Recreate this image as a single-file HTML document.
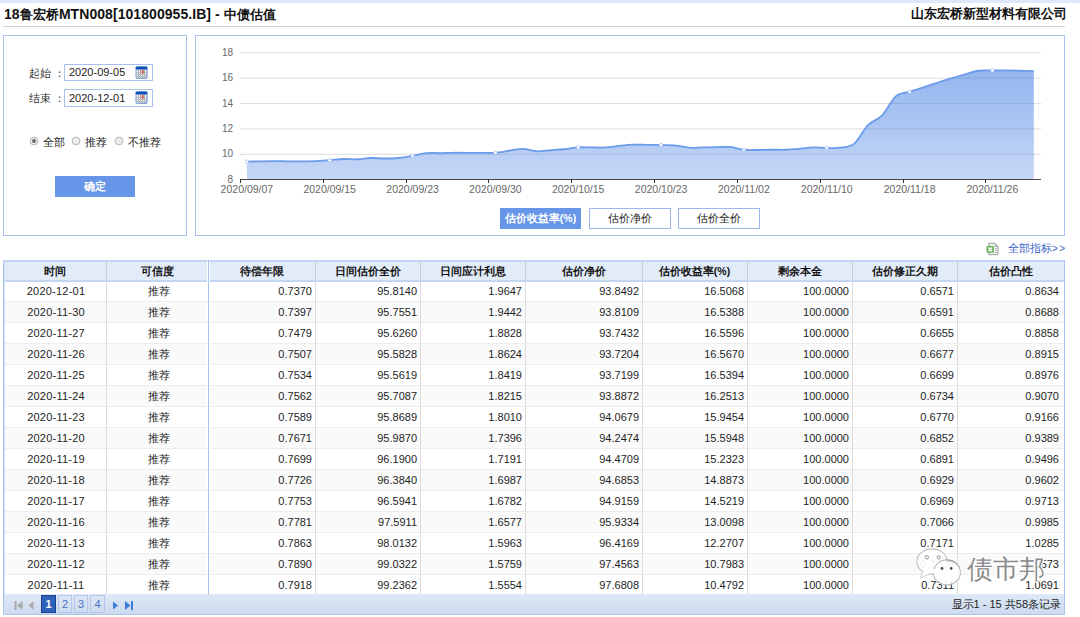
<!DOCTYPE html>
<html><head><meta charset="utf-8">
<style>
html,body{margin:0;padding:0;}
body{width:1080px;height:617px;overflow:hidden;position:relative;background:#fff;font-family:"Liberation Sans",sans-serif;font-size:11px;color:#1e1e1e;}
div,span{position:absolute;}
.chart{position:absolute;left:0;top:0;}
.hd{height:19px;line-height:21px;text-align:center;font-weight:bold;color:#111;font-size:10.5px;}
.cc{height:20px;line-height:20px;text-align:center;padding-left:3px;box-sizing:border-box;}
.dt{letter-spacing:0.22px;}
.cr{height:20px;line-height:20px;text-align:right;}
span{position:static;}
.t{font-size:13px;}
.panel{border:1px solid #a8c1f1;box-sizing:border-box;}
.inp{border:1px solid #a8c1f1;box-sizing:border-box;background:#fff;}
.btn{box-sizing:border-box;border:1px solid #9db7ee;text-align:center;line-height:19px;color:#222;font-size:10.5px;}
</style></head><body>
<div style="left:0;top:0;width:1080px;height:3px;background:#dfe9f9"></div>
<div style="left:4px;top:5px;font-size:14px;font-weight:bold;color:#111;white-space:nowrap;line-height:18px;letter-spacing:0.06px">18<span class="t">鲁宏桥</span>MTN008[101800955.IB] - <span class="t">中债估值</span></div>
<div style="right:13px;top:5px;font-size:13px;font-weight:bold;color:#111;white-space:nowrap;line-height:18px">山东宏桥新型材料有限公司</div>
<div style="left:3px;top:26px;width:1062px;height:1px;background:#cfcfcf"></div>

<div class="panel" style="left:3px;top:35px;width:184px;height:201px"></div>
<div class="panel" style="left:195px;top:35px;width:870px;height:201px"></div>

<div style="left:29px;top:65px;line-height:16px;color:#333">起始 ：</div>
<div class="inp" style="left:64px;top:64px;width:89px;height:17px"></div>
<div style="left:69px;top:65px;line-height:15px;color:#222">2020-09-05</div>
<div style="left:29px;top:90px;line-height:16px;color:#333">结束 ：</div>
<div class="inp" style="left:64px;top:89px;width:89px;height:18px"></div>
<div style="left:69px;top:90px;line-height:16px;color:#222">2020-12-01</div>
<svg style="position:absolute;left:135px;top:66px" width="13" height="13" viewBox="0 0 13 13">
<defs><linearGradient id="cb66" x1="0" y1="0" x2="1" y2="1"><stop offset="0" stop-color="#8fb6e8"/><stop offset="1" stop-color="#3d6fc0"/></linearGradient></defs>
<rect x="0.5" y="0.5" width="12" height="12.3" rx="1.8" fill="url(#cb66)"/>
<rect x="1.6" y="3.2" width="9.9" height="8.5" fill="#f2f2f2"/>
<line x1="3.5" y1="3.5" x2="3.5" y2="11.5" stroke="#a9a9a9" stroke-width="0.9"/><line x1="5.5" y1="3.5" x2="5.5" y2="11.5" stroke="#a9a9a9" stroke-width="0.9"/><line x1="7.5" y1="3.5" x2="7.5" y2="11.5" stroke="#a9a9a9" stroke-width="0.9"/><line x1="9.5" y1="3.5" x2="9.5" y2="11.5" stroke="#a9a9a9" stroke-width="0.9"/><line x1="1.5" y1="6.5" x2="11.5" y2="6.5" stroke="#b5b5b5" stroke-width="0.9"/><line x1="1.5" y1="8.5" x2="11.5" y2="8.5" stroke="#b5b5b5" stroke-width="0.9"/><line x1="1.5" y1="10.5" x2="11.5" y2="10.5" stroke="#b5b5b5" stroke-width="0.9"/><rect x="6.6" y="4" width="2.2" height="3.6" fill="#c95050" opacity="0.8"/>
<rect x="0.5" y="0.5" width="12" height="3" rx="1.5" fill="#0f4fb8"/>
</svg>
<svg style="position:absolute;left:135px;top:91px" width="13" height="13" viewBox="0 0 13 13">
<defs><linearGradient id="cb91" x1="0" y1="0" x2="1" y2="1"><stop offset="0" stop-color="#8fb6e8"/><stop offset="1" stop-color="#3d6fc0"/></linearGradient></defs>
<rect x="0.5" y="0.5" width="12" height="12.3" rx="1.8" fill="url(#cb91)"/>
<rect x="1.6" y="3.2" width="9.9" height="8.5" fill="#f2f2f2"/>
<line x1="3.5" y1="3.5" x2="3.5" y2="11.5" stroke="#a9a9a9" stroke-width="0.9"/><line x1="5.5" y1="3.5" x2="5.5" y2="11.5" stroke="#a9a9a9" stroke-width="0.9"/><line x1="7.5" y1="3.5" x2="7.5" y2="11.5" stroke="#a9a9a9" stroke-width="0.9"/><line x1="9.5" y1="3.5" x2="9.5" y2="11.5" stroke="#a9a9a9" stroke-width="0.9"/><line x1="1.5" y1="6.5" x2="11.5" y2="6.5" stroke="#b5b5b5" stroke-width="0.9"/><line x1="1.5" y1="8.5" x2="11.5" y2="8.5" stroke="#b5b5b5" stroke-width="0.9"/><line x1="1.5" y1="10.5" x2="11.5" y2="10.5" stroke="#b5b5b5" stroke-width="0.9"/><rect x="6.6" y="4" width="2.2" height="3.6" fill="#c95050" opacity="0.8"/>
<rect x="0.5" y="0.5" width="12" height="3" rx="1.5" fill="#0f4fb8"/>
</svg>

<svg style="position:absolute;left:29px;top:136px" width="10" height="10" viewBox="0 0 10 10"><circle cx="5" cy="5" r="3.9" fill="#ececec" stroke="#b0b0b0" stroke-width="0.9"/><circle cx="5" cy="5" r="1.9" fill="#666"/></svg><svg style="position:absolute;left:71px;top:136px" width="10" height="10" viewBox="0 0 10 10"><circle cx="5" cy="5" r="3.9" fill="#ececec" stroke="#b0b0b0" stroke-width="0.9"/></svg><svg style="position:absolute;left:114px;top:136px" width="10" height="10" viewBox="0 0 10 10"><circle cx="5" cy="5" r="3.9" fill="#ececec" stroke="#b0b0b0" stroke-width="0.9"/></svg><div style="left:43px;top:134px;line-height:16px;color:#222">全部</div><div style="left:85px;top:134px;line-height:16px;color:#222">推荐</div><div style="left:128px;top:134px;line-height:16px;color:#222">不推荐</div>

<div style="left:55px;top:176px;width:80px;height:21px;background:#6795e8;color:#fff;font-weight:bold;text-align:center;line-height:21px">确定</div>

<svg class="chart" width="1080" height="240" viewBox="0 0 1080 240">
<defs><linearGradient id="g" x1="0" y1="52" x2="0" y2="179" gradientUnits="userSpaceOnUse">
<stop offset="0" stop-color="#4f86e4" stop-opacity="0.66"/><stop offset="1" stop-color="#4f86e4" stop-opacity="0.33"/></linearGradient></defs>
<line x1="240" y1="154.3" x2="1041" y2="154.3" stroke="#dcdcdc" stroke-width="1"/><line x1="240" y1="128.9" x2="1041" y2="128.9" stroke="#dcdcdc" stroke-width="1"/><line x1="240" y1="103.5" x2="1041" y2="103.5" stroke="#dcdcdc" stroke-width="1"/><line x1="240" y1="78.1" x2="1041" y2="78.1" stroke="#dcdcdc" stroke-width="1"/><line x1="240" y1="52.7" x2="1041" y2="52.7" stroke="#dcdcdc" stroke-width="1"/>
<path d="M246.90 161.67 C249.20 161.61 256.11 161.38 260.71 161.29 C265.31 161.21 269.91 161.17 274.51 161.17 C279.11 161.17 283.72 161.27 288.32 161.29 C292.92 161.31 297.52 161.31 302.12 161.29 C306.73 161.27 311.33 161.36 315.93 161.17 C320.53 160.98 325.13 160.51 329.73 160.15 C334.34 159.79 338.94 159.16 343.54 159.01 C348.14 158.86 352.74 159.43 357.34 159.26 C361.95 159.09 366.55 158.12 371.15 157.99 C375.75 157.86 380.35 158.50 384.95 158.50 C389.56 158.50 394.16 158.44 398.76 157.99 C403.36 157.55 407.96 156.66 412.56 155.83 C417.17 155.01 421.77 153.50 426.37 153.04 C430.97 152.57 435.57 153.08 440.18 153.04 C444.78 153.00 449.38 152.83 453.98 152.78 C458.58 152.74 463.18 152.78 467.79 152.78 C472.39 152.78 476.99 152.78 481.59 152.78 C486.19 152.78 490.79 153.12 495.40 152.78 C500.00 152.45 504.60 151.41 509.20 150.75 C513.80 150.10 518.40 148.76 523.01 148.85 C527.61 148.93 532.21 151.03 536.81 151.26 C541.41 151.49 546.01 150.58 550.62 150.24 C555.22 149.91 559.82 149.71 564.42 149.23 C569.02 148.74 573.63 147.62 578.23 147.32 C582.83 147.03 587.43 147.43 592.03 147.45 C596.63 147.47 601.24 147.73 605.84 147.45 C610.44 147.17 615.04 146.26 619.64 145.80 C624.24 145.33 628.85 144.83 633.45 144.66 C638.05 144.49 642.65 144.72 647.25 144.78 C651.85 144.85 656.46 144.95 661.06 145.04 C665.66 145.12 670.26 144.85 674.86 145.29 C679.46 145.74 684.07 147.34 688.67 147.70 C693.27 148.06 697.87 147.53 702.47 147.45 C707.07 147.37 711.68 147.28 716.28 147.20 C720.88 147.11 725.48 146.52 730.08 146.94 C734.69 147.37 739.29 149.23 743.89 149.74 C748.49 150.24 753.09 149.99 757.69 149.99 C762.30 149.99 766.90 149.78 771.50 149.74 C776.10 149.69 780.70 149.88 785.30 149.74 C789.91 149.59 794.51 149.23 799.11 148.85 C803.71 148.47 808.31 147.60 812.91 147.45 C817.52 147.30 822.12 147.91 826.72 147.96 C831.32 148.00 835.92 148.43 840.52 147.71 C845.13 147.00 849.73 147.45 854.33 143.66 C858.93 139.87 863.53 129.64 868.14 124.96 C872.74 120.28 877.34 120.34 881.94 115.58 C886.54 110.81 891.14 100.35 895.75 96.37 C900.35 92.40 904.95 93.23 909.55 91.73 C914.15 90.23 918.75 88.85 923.36 87.35 C927.96 85.85 932.56 84.26 937.16 82.75 C941.76 81.24 946.36 79.68 950.97 78.29 C955.57 76.90 960.17 75.67 964.77 74.41 C969.37 73.15 973.98 71.42 978.58 70.75 C983.18 70.08 987.78 70.44 992.38 70.40 C996.98 70.36 1001.59 70.43 1006.19 70.49 C1010.79 70.55 1015.39 70.65 1019.99 70.76 C1024.59 70.87 1031.50 71.10 1033.80 71.16 L1033.80 179.20 L246.90 179.20 Z" fill="url(#g)"/>
<path d="M246.90 161.67 C249.20 161.61 256.11 161.38 260.71 161.29 C265.31 161.21 269.91 161.17 274.51 161.17 C279.11 161.17 283.72 161.27 288.32 161.29 C292.92 161.31 297.52 161.31 302.12 161.29 C306.73 161.27 311.33 161.36 315.93 161.17 C320.53 160.98 325.13 160.51 329.73 160.15 C334.34 159.79 338.94 159.16 343.54 159.01 C348.14 158.86 352.74 159.43 357.34 159.26 C361.95 159.09 366.55 158.12 371.15 157.99 C375.75 157.86 380.35 158.50 384.95 158.50 C389.56 158.50 394.16 158.44 398.76 157.99 C403.36 157.55 407.96 156.66 412.56 155.83 C417.17 155.01 421.77 153.50 426.37 153.04 C430.97 152.57 435.57 153.08 440.18 153.04 C444.78 153.00 449.38 152.83 453.98 152.78 C458.58 152.74 463.18 152.78 467.79 152.78 C472.39 152.78 476.99 152.78 481.59 152.78 C486.19 152.78 490.79 153.12 495.40 152.78 C500.00 152.45 504.60 151.41 509.20 150.75 C513.80 150.10 518.40 148.76 523.01 148.85 C527.61 148.93 532.21 151.03 536.81 151.26 C541.41 151.49 546.01 150.58 550.62 150.24 C555.22 149.91 559.82 149.71 564.42 149.23 C569.02 148.74 573.63 147.62 578.23 147.32 C582.83 147.03 587.43 147.43 592.03 147.45 C596.63 147.47 601.24 147.73 605.84 147.45 C610.44 147.17 615.04 146.26 619.64 145.80 C624.24 145.33 628.85 144.83 633.45 144.66 C638.05 144.49 642.65 144.72 647.25 144.78 C651.85 144.85 656.46 144.95 661.06 145.04 C665.66 145.12 670.26 144.85 674.86 145.29 C679.46 145.74 684.07 147.34 688.67 147.70 C693.27 148.06 697.87 147.53 702.47 147.45 C707.07 147.37 711.68 147.28 716.28 147.20 C720.88 147.11 725.48 146.52 730.08 146.94 C734.69 147.37 739.29 149.23 743.89 149.74 C748.49 150.24 753.09 149.99 757.69 149.99 C762.30 149.99 766.90 149.78 771.50 149.74 C776.10 149.69 780.70 149.88 785.30 149.74 C789.91 149.59 794.51 149.23 799.11 148.85 C803.71 148.47 808.31 147.60 812.91 147.45 C817.52 147.30 822.12 147.91 826.72 147.96 C831.32 148.00 835.92 148.43 840.52 147.71 C845.13 147.00 849.73 147.45 854.33 143.66 C858.93 139.87 863.53 129.64 868.14 124.96 C872.74 120.28 877.34 120.34 881.94 115.58 C886.54 110.81 891.14 100.35 895.75 96.37 C900.35 92.40 904.95 93.23 909.55 91.73 C914.15 90.23 918.75 88.85 923.36 87.35 C927.96 85.85 932.56 84.26 937.16 82.75 C941.76 81.24 946.36 79.68 950.97 78.29 C955.57 76.90 960.17 75.67 964.77 74.41 C969.37 73.15 973.98 71.42 978.58 70.75 C983.18 70.08 987.78 70.44 992.38 70.40 C996.98 70.36 1001.59 70.43 1006.19 70.49 C1010.79 70.55 1015.39 70.65 1019.99 70.76 C1024.59 70.87 1031.50 71.10 1033.80 71.16" fill="none" stroke="#6b9bea" stroke-width="1.8"/>
<circle cx="246.90" cy="161.67" r="1.7" fill="#fff" stroke="#9dbdf0" stroke-width="0.7"/><circle cx="329.73" cy="160.15" r="1.7" fill="#fff" stroke="#9dbdf0" stroke-width="0.7"/><circle cx="412.56" cy="155.83" r="1.7" fill="#fff" stroke="#9dbdf0" stroke-width="0.7"/><circle cx="495.40" cy="152.78" r="1.7" fill="#fff" stroke="#9dbdf0" stroke-width="0.7"/><circle cx="578.23" cy="147.32" r="1.7" fill="#fff" stroke="#9dbdf0" stroke-width="0.7"/><circle cx="661.06" cy="145.04" r="1.7" fill="#fff" stroke="#9dbdf0" stroke-width="0.7"/><circle cx="743.89" cy="149.74" r="1.7" fill="#fff" stroke="#9dbdf0" stroke-width="0.7"/><circle cx="826.72" cy="147.96" r="1.7" fill="#fff" stroke="#9dbdf0" stroke-width="0.7"/><circle cx="909.55" cy="91.73" r="1.7" fill="#fff" stroke="#9dbdf0" stroke-width="0.7"/><circle cx="992.38" cy="70.40" r="1.7" fill="#fff" stroke="#9dbdf0" stroke-width="0.7"/>
<line x1="240" y1="179.5" x2="1041" y2="179.5" stroke="#4a4a4a" stroke-width="1.2"/>
<line x1="240.5" y1="179" x2="240.5" y2="183" stroke="#333" stroke-width="1"/><line x1="323.5" y1="179" x2="323.5" y2="183" stroke="#333" stroke-width="1"/><line x1="406.5" y1="179" x2="406.5" y2="183" stroke="#333" stroke-width="1"/><line x1="488.5" y1="179" x2="488.5" y2="183" stroke="#333" stroke-width="1"/><line x1="571.5" y1="179" x2="571.5" y2="183" stroke="#333" stroke-width="1"/><line x1="654.5" y1="179" x2="654.5" y2="183" stroke="#333" stroke-width="1"/><line x1="737.5" y1="179" x2="737.5" y2="183" stroke="#333" stroke-width="1"/><line x1="820.5" y1="179" x2="820.5" y2="183" stroke="#333" stroke-width="1"/><line x1="903.5" y1="179" x2="903.5" y2="183" stroke="#333" stroke-width="1"/><line x1="985.5" y1="179" x2="985.5" y2="183" stroke="#333" stroke-width="1"/>
<g font-family="Liberation Sans, sans-serif" font-size="10" fill="#686868"><text x="233" y="182.8" text-anchor="end">8</text><text x="233" y="157.4" text-anchor="end">10</text><text x="233" y="132.0" text-anchor="end">12</text><text x="233" y="106.6" text-anchor="end">14</text><text x="233" y="81.2" text-anchor="end">16</text><text x="233" y="55.8" text-anchor="end">18</text><text x="246.9" y="193.3" text-anchor="middle" font-size="10.5" fill="#686868">2020/09/07</text><text x="329.7" y="193.3" text-anchor="middle" font-size="10.5" fill="#686868">2020/09/15</text><text x="412.6" y="193.3" text-anchor="middle" font-size="10.5" fill="#686868">2020/09/23</text><text x="495.4" y="193.3" text-anchor="middle" font-size="10.5" fill="#686868">2020/09/30</text><text x="578.2" y="193.3" text-anchor="middle" font-size="10.5" fill="#686868">2020/10/15</text><text x="661.1" y="193.3" text-anchor="middle" font-size="10.5" fill="#686868">2020/10/23</text><text x="743.9" y="193.3" text-anchor="middle" font-size="10.5" fill="#686868">2020/11/02</text><text x="826.7" y="193.3" text-anchor="middle" font-size="10.5" fill="#686868">2020/11/10</text><text x="909.6" y="193.3" text-anchor="middle" font-size="10.5" fill="#686868">2020/11/18</text><text x="992.4" y="193.3" text-anchor="middle" font-size="10.5" fill="#686868">2020/11/26</text></g>
</svg>

<div class="btn" style="left:500px;top:208px;width:81px;height:21px;background:#6795e8;border-color:#6795e8;color:#fff;font-weight:bold;">估价收益率(%)</div>
<div class="btn" style="left:589px;top:208px;width:82px;height:21px;">估价净价</div>
<div class="btn" style="left:678px;top:208px;width:82px;height:21px;">估价全价</div>

<svg style="position:absolute;left:986px;top:242px" width="14" height="14" viewBox="0 0 14 14">
<path d="M2.8 1.3 H9 L12 4.3 V12.7 H2.8 Z" fill="#fafafa" stroke="#8f9a9a" stroke-width="1"/>
<path d="M9 1.3 V4.3 H12" fill="#cfd6d6" stroke="#8f9a9a" stroke-width="0.8"/>
<g stroke="#9aa" stroke-width="0.9"><line x1="8.8" y1="6.5" x2="11" y2="6.5"/><line x1="8.8" y1="8.5" x2="11" y2="8.5"/><line x1="8.8" y1="10.5" x2="11" y2="10.5"/></g>
<rect x="0.5" y="3.8" width="7.5" height="7.2" rx="1.5" fill="#6fb861"/>
<path d="M2.5 5.5 L6 9.5 M6 5.5 L2.5 9.5" stroke="#fff" stroke-width="1.3"/>
</svg>
<div style="left:1008px;top:241px;color:#3a64c8;line-height:14px">全部指标<span style="font-size:10px;letter-spacing:1.5px">&gt;&gt;</span></div>

<div style="left:3px;top:260px;width:1062px;height:22px;background:#e2ebf8;border-top:2px solid #c3d5f0;border-bottom:2px solid #c3d5f0;box-sizing:border-box;z-index:2"></div>
<div class="hd" style="left:3px;top:261px;width:103px;z-index:3">时间</div>
<div class="hd" style="left:106px;top:261px;width:102px;z-index:3">可信度</div>
<div class="hd" style="left:208px;top:261px;width:107px;z-index:3">待偿年限</div>
<div class="hd" style="left:315px;top:261px;width:105px;z-index:3">日间估价全价</div>
<div class="hd" style="left:420px;top:261px;width:105px;z-index:3">日间应计利息</div>
<div class="hd" style="left:525px;top:261px;width:117px;z-index:3">估价净价</div>
<div class="hd" style="left:642px;top:261px;width:105px;z-index:3">估价收益率(%)</div>
<div class="hd" style="left:747px;top:261px;width:105px;z-index:3">剩余本金</div>
<div class="hd" style="left:852px;top:261px;width:105px;z-index:3">估价修正久期</div>
<div class="hd" style="left:957px;top:261px;width:107px;z-index:3">估价凸性</div>
<div style="left:4px;top:281px;width:1060px;height:21px;background:#ffffff;border-bottom:1px solid #ededed;box-sizing:border-box"></div>
<div class="cc dt" style="left:3px;top:281px;width:103px;">2020-12-01</div>
<div class="cc" style="left:106px;top:281px;width:102px;">推荐</div>
<div class="cr" style="left:208px;top:281px;width:104px;">0.7370</div>
<div class="cr" style="left:315px;top:281px;width:102px;">95.8140</div>
<div class="cr" style="left:420px;top:281px;width:102px;">1.9647</div>
<div class="cr" style="left:525px;top:281px;width:114px;">93.8492</div>
<div class="cr" style="left:642px;top:281px;width:102px;">16.5068</div>
<div class="cr" style="left:747px;top:281px;width:102px;">100.0000</div>
<div class="cr" style="left:852px;top:281px;width:102px;">0.6571</div>
<div class="cr" style="left:957px;top:281px;width:102px;">0.8634</div>
<div style="left:4px;top:302px;width:1060px;height:21px;background:#fafafa;border-bottom:1px solid #ededed;box-sizing:border-box"></div>
<div class="cc dt" style="left:3px;top:302px;width:103px;">2020-11-30</div>
<div class="cc" style="left:106px;top:302px;width:102px;">推荐</div>
<div class="cr" style="left:208px;top:302px;width:104px;">0.7397</div>
<div class="cr" style="left:315px;top:302px;width:102px;">95.7551</div>
<div class="cr" style="left:420px;top:302px;width:102px;">1.9442</div>
<div class="cr" style="left:525px;top:302px;width:114px;">93.8109</div>
<div class="cr" style="left:642px;top:302px;width:102px;">16.5388</div>
<div class="cr" style="left:747px;top:302px;width:102px;">100.0000</div>
<div class="cr" style="left:852px;top:302px;width:102px;">0.6591</div>
<div class="cr" style="left:957px;top:302px;width:102px;">0.8688</div>
<div style="left:4px;top:323px;width:1060px;height:21px;background:#ffffff;border-bottom:1px solid #ededed;box-sizing:border-box"></div>
<div class="cc dt" style="left:3px;top:323px;width:103px;">2020-11-27</div>
<div class="cc" style="left:106px;top:323px;width:102px;">推荐</div>
<div class="cr" style="left:208px;top:323px;width:104px;">0.7479</div>
<div class="cr" style="left:315px;top:323px;width:102px;">95.6260</div>
<div class="cr" style="left:420px;top:323px;width:102px;">1.8828</div>
<div class="cr" style="left:525px;top:323px;width:114px;">93.7432</div>
<div class="cr" style="left:642px;top:323px;width:102px;">16.5596</div>
<div class="cr" style="left:747px;top:323px;width:102px;">100.0000</div>
<div class="cr" style="left:852px;top:323px;width:102px;">0.6655</div>
<div class="cr" style="left:957px;top:323px;width:102px;">0.8858</div>
<div style="left:4px;top:344px;width:1060px;height:21px;background:#fafafa;border-bottom:1px solid #ededed;box-sizing:border-box"></div>
<div class="cc dt" style="left:3px;top:344px;width:103px;">2020-11-26</div>
<div class="cc" style="left:106px;top:344px;width:102px;">推荐</div>
<div class="cr" style="left:208px;top:344px;width:104px;">0.7507</div>
<div class="cr" style="left:315px;top:344px;width:102px;">95.5828</div>
<div class="cr" style="left:420px;top:344px;width:102px;">1.8624</div>
<div class="cr" style="left:525px;top:344px;width:114px;">93.7204</div>
<div class="cr" style="left:642px;top:344px;width:102px;">16.5670</div>
<div class="cr" style="left:747px;top:344px;width:102px;">100.0000</div>
<div class="cr" style="left:852px;top:344px;width:102px;">0.6677</div>
<div class="cr" style="left:957px;top:344px;width:102px;">0.8915</div>
<div style="left:4px;top:365px;width:1060px;height:21px;background:#ffffff;border-bottom:1px solid #ededed;box-sizing:border-box"></div>
<div class="cc dt" style="left:3px;top:365px;width:103px;">2020-11-25</div>
<div class="cc" style="left:106px;top:365px;width:102px;">推荐</div>
<div class="cr" style="left:208px;top:365px;width:104px;">0.7534</div>
<div class="cr" style="left:315px;top:365px;width:102px;">95.5619</div>
<div class="cr" style="left:420px;top:365px;width:102px;">1.8419</div>
<div class="cr" style="left:525px;top:365px;width:114px;">93.7199</div>
<div class="cr" style="left:642px;top:365px;width:102px;">16.5394</div>
<div class="cr" style="left:747px;top:365px;width:102px;">100.0000</div>
<div class="cr" style="left:852px;top:365px;width:102px;">0.6699</div>
<div class="cr" style="left:957px;top:365px;width:102px;">0.8976</div>
<div style="left:4px;top:386px;width:1060px;height:21px;background:#fafafa;border-bottom:1px solid #ededed;box-sizing:border-box"></div>
<div class="cc dt" style="left:3px;top:386px;width:103px;">2020-11-24</div>
<div class="cc" style="left:106px;top:386px;width:102px;">推荐</div>
<div class="cr" style="left:208px;top:386px;width:104px;">0.7562</div>
<div class="cr" style="left:315px;top:386px;width:102px;">95.7087</div>
<div class="cr" style="left:420px;top:386px;width:102px;">1.8215</div>
<div class="cr" style="left:525px;top:386px;width:114px;">93.8872</div>
<div class="cr" style="left:642px;top:386px;width:102px;">16.2513</div>
<div class="cr" style="left:747px;top:386px;width:102px;">100.0000</div>
<div class="cr" style="left:852px;top:386px;width:102px;">0.6734</div>
<div class="cr" style="left:957px;top:386px;width:102px;">0.9070</div>
<div style="left:4px;top:407px;width:1060px;height:21px;background:#ffffff;border-bottom:1px solid #ededed;box-sizing:border-box"></div>
<div class="cc dt" style="left:3px;top:407px;width:103px;">2020-11-23</div>
<div class="cc" style="left:106px;top:407px;width:102px;">推荐</div>
<div class="cr" style="left:208px;top:407px;width:104px;">0.7589</div>
<div class="cr" style="left:315px;top:407px;width:102px;">95.8689</div>
<div class="cr" style="left:420px;top:407px;width:102px;">1.8010</div>
<div class="cr" style="left:525px;top:407px;width:114px;">94.0679</div>
<div class="cr" style="left:642px;top:407px;width:102px;">15.9454</div>
<div class="cr" style="left:747px;top:407px;width:102px;">100.0000</div>
<div class="cr" style="left:852px;top:407px;width:102px;">0.6770</div>
<div class="cr" style="left:957px;top:407px;width:102px;">0.9166</div>
<div style="left:4px;top:428px;width:1060px;height:21px;background:#fafafa;border-bottom:1px solid #ededed;box-sizing:border-box"></div>
<div class="cc dt" style="left:3px;top:428px;width:103px;">2020-11-20</div>
<div class="cc" style="left:106px;top:428px;width:102px;">推荐</div>
<div class="cr" style="left:208px;top:428px;width:104px;">0.7671</div>
<div class="cr" style="left:315px;top:428px;width:102px;">95.9870</div>
<div class="cr" style="left:420px;top:428px;width:102px;">1.7396</div>
<div class="cr" style="left:525px;top:428px;width:114px;">94.2474</div>
<div class="cr" style="left:642px;top:428px;width:102px;">15.5948</div>
<div class="cr" style="left:747px;top:428px;width:102px;">100.0000</div>
<div class="cr" style="left:852px;top:428px;width:102px;">0.6852</div>
<div class="cr" style="left:957px;top:428px;width:102px;">0.9389</div>
<div style="left:4px;top:449px;width:1060px;height:21px;background:#ffffff;border-bottom:1px solid #ededed;box-sizing:border-box"></div>
<div class="cc dt" style="left:3px;top:449px;width:103px;">2020-11-19</div>
<div class="cc" style="left:106px;top:449px;width:102px;">推荐</div>
<div class="cr" style="left:208px;top:449px;width:104px;">0.7699</div>
<div class="cr" style="left:315px;top:449px;width:102px;">96.1900</div>
<div class="cr" style="left:420px;top:449px;width:102px;">1.7191</div>
<div class="cr" style="left:525px;top:449px;width:114px;">94.4709</div>
<div class="cr" style="left:642px;top:449px;width:102px;">15.2323</div>
<div class="cr" style="left:747px;top:449px;width:102px;">100.0000</div>
<div class="cr" style="left:852px;top:449px;width:102px;">0.6891</div>
<div class="cr" style="left:957px;top:449px;width:102px;">0.9496</div>
<div style="left:4px;top:470px;width:1060px;height:21px;background:#fafafa;border-bottom:1px solid #ededed;box-sizing:border-box"></div>
<div class="cc dt" style="left:3px;top:470px;width:103px;">2020-11-18</div>
<div class="cc" style="left:106px;top:470px;width:102px;">推荐</div>
<div class="cr" style="left:208px;top:470px;width:104px;">0.7726</div>
<div class="cr" style="left:315px;top:470px;width:102px;">96.3840</div>
<div class="cr" style="left:420px;top:470px;width:102px;">1.6987</div>
<div class="cr" style="left:525px;top:470px;width:114px;">94.6853</div>
<div class="cr" style="left:642px;top:470px;width:102px;">14.8873</div>
<div class="cr" style="left:747px;top:470px;width:102px;">100.0000</div>
<div class="cr" style="left:852px;top:470px;width:102px;">0.6929</div>
<div class="cr" style="left:957px;top:470px;width:102px;">0.9602</div>
<div style="left:4px;top:491px;width:1060px;height:21px;background:#ffffff;border-bottom:1px solid #ededed;box-sizing:border-box"></div>
<div class="cc dt" style="left:3px;top:491px;width:103px;">2020-11-17</div>
<div class="cc" style="left:106px;top:491px;width:102px;">推荐</div>
<div class="cr" style="left:208px;top:491px;width:104px;">0.7753</div>
<div class="cr" style="left:315px;top:491px;width:102px;">96.5941</div>
<div class="cr" style="left:420px;top:491px;width:102px;">1.6782</div>
<div class="cr" style="left:525px;top:491px;width:114px;">94.9159</div>
<div class="cr" style="left:642px;top:491px;width:102px;">14.5219</div>
<div class="cr" style="left:747px;top:491px;width:102px;">100.0000</div>
<div class="cr" style="left:852px;top:491px;width:102px;">0.6969</div>
<div class="cr" style="left:957px;top:491px;width:102px;">0.9713</div>
<div style="left:4px;top:512px;width:1060px;height:21px;background:#fafafa;border-bottom:1px solid #ededed;box-sizing:border-box"></div>
<div class="cc dt" style="left:3px;top:512px;width:103px;">2020-11-16</div>
<div class="cc" style="left:106px;top:512px;width:102px;">推荐</div>
<div class="cr" style="left:208px;top:512px;width:104px;">0.7781</div>
<div class="cr" style="left:315px;top:512px;width:102px;">97.5911</div>
<div class="cr" style="left:420px;top:512px;width:102px;">1.6577</div>
<div class="cr" style="left:525px;top:512px;width:114px;">95.9334</div>
<div class="cr" style="left:642px;top:512px;width:102px;">13.0098</div>
<div class="cr" style="left:747px;top:512px;width:102px;">100.0000</div>
<div class="cr" style="left:852px;top:512px;width:102px;">0.7066</div>
<div class="cr" style="left:957px;top:512px;width:102px;">0.9985</div>
<div style="left:4px;top:533px;width:1060px;height:21px;background:#ffffff;border-bottom:1px solid #ededed;box-sizing:border-box"></div>
<div class="cc dt" style="left:3px;top:533px;width:103px;">2020-11-13</div>
<div class="cc" style="left:106px;top:533px;width:102px;">推荐</div>
<div class="cr" style="left:208px;top:533px;width:104px;">0.7863</div>
<div class="cr" style="left:315px;top:533px;width:102px;">98.0132</div>
<div class="cr" style="left:420px;top:533px;width:102px;">1.5963</div>
<div class="cr" style="left:525px;top:533px;width:114px;">96.4169</div>
<div class="cr" style="left:642px;top:533px;width:102px;">12.2707</div>
<div class="cr" style="left:747px;top:533px;width:102px;">100.0000</div>
<div class="cr" style="left:852px;top:533px;width:102px;">0.7171</div>
<div class="cr" style="left:957px;top:533px;width:102px;">1.0285</div>
<div style="left:4px;top:554px;width:1060px;height:21px;background:#fafafa;border-bottom:1px solid #ededed;box-sizing:border-box"></div>
<div class="cc dt" style="left:3px;top:554px;width:103px;">2020-11-12</div>
<div class="cc" style="left:106px;top:554px;width:102px;">推荐</div>
<div class="cr" style="left:208px;top:554px;width:104px;">0.7890</div>
<div class="cr" style="left:315px;top:554px;width:102px;">99.0322</div>
<div class="cr" style="left:420px;top:554px;width:102px;">1.5759</div>
<div class="cr" style="left:525px;top:554px;width:114px;">97.4563</div>
<div class="cr" style="left:642px;top:554px;width:102px;">10.7983</div>
<div class="cr" style="left:747px;top:554px;width:102px;">100.0000</div>
<div class="cr" style="left:852px;top:554px;width:102px;">0.7236</div>
<div class="cr" style="left:957px;top:554px;width:102px;">1.0573</div>
<div style="left:4px;top:575px;width:1060px;height:21px;background:#ffffff;border-bottom:1px solid #ededed;box-sizing:border-box"></div>
<div class="cc dt" style="left:3px;top:575px;width:103px;">2020-11-11</div>
<div class="cc" style="left:106px;top:575px;width:102px;">推荐</div>
<div class="cr" style="left:208px;top:575px;width:104px;">0.7918</div>
<div class="cr" style="left:315px;top:575px;width:102px;">99.2362</div>
<div class="cr" style="left:420px;top:575px;width:102px;">1.5554</div>
<div class="cr" style="left:525px;top:575px;width:114px;">97.6808</div>
<div class="cr" style="left:642px;top:575px;width:102px;">10.4792</div>
<div class="cr" style="left:747px;top:575px;width:102px;">100.0000</div>
<div class="cr" style="left:852px;top:575px;width:102px;">0.7311</div>
<div class="cr" style="left:957px;top:575px;width:102px;">1.0691</div>
<div style="left:106px;top:262px;width:1px;height:18px;background:#c9ccd2;z-index:3"></div>
<div style="left:106px;top:281px;width:1px;height:313px;background:#dcdcdc"></div>
<div style="left:207px;top:261px;width:3px;height:333px;background:#fff;z-index:4"></div>
<div style="left:208px;top:260px;width:1px;height:334px;background:#a9c4ec;z-index:5"></div>
<div style="left:315px;top:262px;width:1px;height:18px;background:#c9ccd2;z-index:3"></div>
<div style="left:315px;top:281px;width:1px;height:313px;background:#dcdcdc"></div>
<div style="left:420px;top:262px;width:1px;height:18px;background:#c9ccd2;z-index:3"></div>
<div style="left:420px;top:281px;width:1px;height:313px;background:#dcdcdc"></div>
<div style="left:525px;top:262px;width:1px;height:18px;background:#c9ccd2;z-index:3"></div>
<div style="left:525px;top:281px;width:1px;height:313px;background:#dcdcdc"></div>
<div style="left:642px;top:262px;width:1px;height:18px;background:#c9ccd2;z-index:3"></div>
<div style="left:642px;top:281px;width:1px;height:313px;background:#dcdcdc"></div>
<div style="left:747px;top:262px;width:1px;height:18px;background:#c9ccd2;z-index:3"></div>
<div style="left:747px;top:281px;width:1px;height:313px;background:#dcdcdc"></div>
<div style="left:852px;top:262px;width:1px;height:18px;background:#c9ccd2;z-index:3"></div>
<div style="left:852px;top:281px;width:1px;height:313px;background:#dcdcdc"></div>
<div style="left:957px;top:262px;width:1px;height:18px;background:#c9ccd2;z-index:3"></div>
<div style="left:957px;top:281px;width:1px;height:313px;background:#dcdcdc"></div>
<div style="left:3px;top:260px;width:1px;height:355px;background:#a9c4ec;z-index:5"></div>
<div style="left:4px;top:260px;width:1px;height:355px;background:#d3e1f5;z-index:5"></div>
<div style="left:1064px;top:260px;width:1px;height:355px;background:#a9c4ec;z-index:5"></div>

<div style="left:3px;top:594px;width:1062px;height:21px;background:linear-gradient(#dee8f6,#cddaee);border:1px solid #a9c4ec;border-top:none;box-sizing:border-box"></div>
<svg style="position:absolute;left:14px;top:600px" width="125" height="11" viewBox="0 0 125 11">
<rect x="0.5" y="1" width="2" height="9" fill="#aaa"/><path d="M8.5 1 L3 5.5 L8.5 10 Z" fill="#aaa"/>
<path d="M19.5 1 L14.5 5.5 L19.5 10 Z" fill="#aaa"/>
<path d="M99 1.5 L104 5.5 L99 9.5 Z" fill="#3f7ee0"/>
<path d="M111 1 L116.5 5.5 L111 10 Z" fill="#3f7ee0"/><rect x="117" y="1" width="2" height="9" fill="#3f7ee0"/>
</svg>
<div style="left:41px;top:595px;width:15px;height:18px;box-sizing:border-box;border:1px solid #1b3e93;background:#2e62b8;color:#fff;font-weight:bold;text-align:center;line-height:16px">1</div>
<div style="left:58px;top:595px;width:14px;height:18px;box-sizing:border-box;border:1px solid #b2c7eb;color:#4d72c4;text-align:center;line-height:16px">2</div>
<div style="left:74px;top:595px;width:14px;height:18px;box-sizing:border-box;border:1px solid #b2c7eb;color:#4d72c4;text-align:center;line-height:16px">3</div>
<div style="left:90px;top:595px;width:15px;height:18px;box-sizing:border-box;border:1px solid #b2c7eb;color:#4d72c4;text-align:center;line-height:16px">4</div>
<div style="right:19px;top:596px;line-height:16px;color:#222;white-space:nowrap">显示1 - 15 共58条记录</div>
<svg style="position:absolute;left:900px;top:540px" width="170" height="50" viewBox="0 0 170 50">
<defs><filter id="sh" x="-20%" y="-20%" width="140%" height="140%"><feGaussianBlur stdDeviation="0.6"/></filter></defs>
<g stroke="#bdbdbd" stroke-width="1.3" fill="none" filter="url(#sh)">
<ellipse cx="32" cy="21.5" rx="15" ry="12.5"/>
<path d="M23 31 L21 37.5 L30 33.5"/>
<ellipse cx="46.8" cy="32.7" rx="13.5" ry="12"/>
</g>
<g fill="rgba(255,255,255,0.93)">
<ellipse cx="32" cy="21.5" rx="14.5" ry="12"/>
<path d="M23 31 L21 37.5 L30 33.5 Z"/>
<ellipse cx="46.8" cy="32.7" rx="13" ry="11.5"/>
</g>
<path d="M34 29 A13.5 12 0 0 1 60 28" stroke="#aaa" stroke-width="1" fill="none"/>
<g fill="#fff" stroke="#8a8a8a" stroke-width="0.9"><circle cx="26.8" cy="17.4" r="1.7"/><circle cx="38.8" cy="17.4" r="1.7"/></g>
<g fill="#444"><circle cx="42" cy="28.4" r="1.3"/><circle cx="51.2" cy="28.4" r="1.3"/></g>
<text x="67" y="38" font-size="26" fill="none" stroke="rgba(255,255,255,0.9)" stroke-width="3" stroke-linejoin="round" font-family="Liberation Sans, sans-serif" font-weight="200">债市邦</text>
<text x="67" y="38" font-size="26" fill="#8c8c8c" font-family="Liberation Sans, sans-serif" font-weight="200">债市邦</text>
</svg>
</body></html>
